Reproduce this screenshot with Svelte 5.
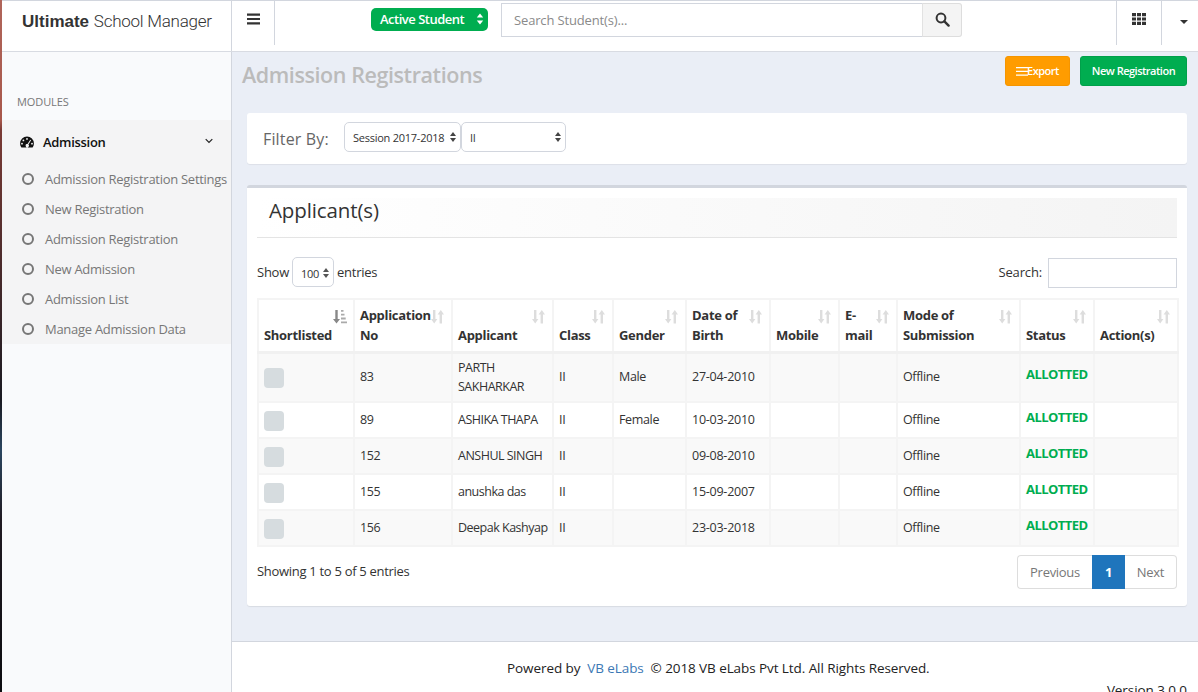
<script>
  const menu = ['Admission Registration Settings', 'New Registration', 'Admission Registration', 'New Admission', 'Admission List', 'Manage Admission Data'];
  const cols = [
    { l: ['Shortlisted'], active: true },
    { l: ['Application', 'No'] },
    { l: ['Applicant'] },
    { l: ['Class'] },
    { l: ['Gender'] },
    { l: ['Date of', 'Birth'] },
    { l: ['Mobile'] },
    { l: ['E-', 'mail'] },
    { l: ['Mode of', 'Submission'] },
    { l: ['Status'] },
    { l: ['Action(s)'] }
  ];
  const rows = [
    { no: '83', name: ['PARTH', 'SAKHARKAR'], g: 'Male', d: '27-04-2010' },
    { no: '89', name: ['ASHIKA THAPA'], g: 'Female', d: '10-03-2010' },
    { no: '152', name: ['ANSHUL SINGH'], g: '', d: '09-08-2010' },
    { no: '155', name: ['anushka das'], g: '', d: '15-09-2007' },
    { no: '156', name: ['Deepak Kashyap'], g: '', d: '23-03-2018' }
  ];
</script>

<div class="page">
  <div class="strip"></div>
  <div class="shell">
    <header class="topbar">
      <div class="brand"><b>Ultimate</b> <span>School Manager</span></div>
      <button class="toggle" aria-label="Toggle menu">
        <svg width="13" height="12" viewBox="0 0 13 12"><path d="M0 .5h13v2.2H0zM0 4.9h13v2.2H0zM0 9.3h13v2.2H0z" fill="#333"/></svg>
      </button>
      <div class="navcenter">
        <div class="status">
          <span>Active Student</span>
          <svg width="8" height="12" viewBox="0 0 8 12"><path d="M4 .5 7.2 4.6H.8zM4 11.5 .8 7.4h6.4z" fill="#fff"/></svg>
        </div>
        <div class="searchgroup">
          <div class="searchinput">Search Student(s)...</div>
          <div class="searchbtn">
            <svg width="15" height="15" viewBox="0 0 15 15"><circle cx="6" cy="6" r="4.4" fill="none" stroke="#333" stroke-width="2"/><path d="m9.4 9.4 4.2 4.2" stroke="#333" stroke-width="2.4" stroke-linecap="round"/></svg>
          </div>
        </div>
      </div>
      <div class="navright">
        <div class="navitem grid">
          <svg width="14" height="12" viewBox="0 0 14 12" fill="#333"><path d="M0 0h4v3.2H0zM5 0h4v3.2H5zM10 0h4v3.2h-4zM0 4.400h4v3.200H0zM5 4.400h4v3.200H5zM10 4.400h4v3.200h-4zM0 8.800h4V12H0zM5 8.800h4V12H5zM10 8.800h4V12h-4z"/></svg>
        </div>
        <div class="navitem caretitem">
          <svg width="8" height="4" viewBox="0 0 8 4"><path d="M0 0h8L4 4z" fill="#333"/></svg>
        </div>
      </div>
    </header>

    <div class="body">
      <aside class="sidebar">
        <div class="modules">MODULES</div>
        <div class="tree">
          <div class="treehead">
            <svg width="14" height="12" viewBox="0 0 14 12"><path fill-rule="evenodd" d="M7 .6A6.9 6.9 0 0 0 .1 7.5c0 1.5.5 2.9 1.3 4h11.200c.8-1.100 1.300-2.500 1.300-4A6.900 6.900 0 0 0 7 .6zM7 2a.9.9 0 1 1 0 1.800A.9.9 0 0 1 7 2zM3.400 3.500a.9.9 0 1 1 0 1.800.9.9 0 0 1 0-1.800zM2 6.800a.9.9 0 1 1 0 1.800.9.9 0 0 1 0-1.800zm10 0a.9.9 0 1 1 0 1.800.9.9 0 0 1 0-1.800zM10.300 3.700l.8.5-2.700 4.400a1.600 1.600 0 1 1-.9-.5z" fill="#111"/></svg>
            <span class="treetitle">Admission</span>
            <svg class="chev" width="8" height="6" viewBox="0 0 8 6"><path d="m.7 1.200 3.300 3.300 3.300-3.300" fill="none" stroke="#222" stroke-width="1.200"/></svg>
          </div>
          {#each menu as m}
            <div class="treeitem"><span class="ring"></span><span>{m}</span></div>
          {/each}
        </div>
      </aside>

      <main class="main">
        <div class="content">
          <div class="titlerow">
            <h1>Admission Registrations</h1>
            <div class="actions">
              <div class="btn orange">
                <svg width="12" height="9" viewBox="0 0 12 9"><path d="M0 0h12v1.200H0zM0 3.800h12V5H0zM0 7.600h12v1.200H0z" fill="#fff"/></svg><span>Export</span>
              </div>
              <div class="btn green">New Registration</div>
            </div>
          </div>

          <section class="filter">
            <span class="filterlabel">Filter By:</span>
            <div class="sel session">
              <span>Session 2017-2018</span>
              <svg width="6" height="10" viewBox="0 0 6 10"><path d="M3 0 6 4H0zM3 10 0 6h6z" fill="#444"/></svg>
            </div>
            <div class="sel cls">
              <span>II</span>
              <svg width="6" height="10" viewBox="0 0 6 10"><path d="M3 0 6 4H0zM3 10 0 6h6z" fill="#444"/></svg>
            </div>
          </section>

          <section class="box">
            <div class="boxhead"><h2>Applicant(s)</h2></div>
            <div class="controls">
              <div class="show">
                Show
                <div class="sel len">
                  <span>100</span>
                  <svg width="6" height="10" viewBox="0 0 6 10"><path d="M3 0 6 4H0zM3 10 0 6h6z" fill="#555"/></svg>
                </div>
                entries
              </div>
              <div class="dtsearch"><span class="dtlabel">Search:</span> <span class="dtinput"></span></div>
            </div>

            <table>
              <thead>
                <tr>
                  {#each cols as c}
                    <th>
                      <div class="thlabel">
                        {#each c.l as line}<div>{line}</div>{/each}
                      </div>
                      {#if c.active}
                        <span class="sort on">
                          <svg width="14" height="15" viewBox="0 0 14 15"><path d="M2.300 1h2.400v9h2.300L3.500 14.500 0 10h2.300z" fill="#888"/><path d="M8 1h2.500v1.800H8zM8 4.800h3.500v1.800H8zM8 8.600h4.700v1.800H8zM8 12.400H14v1.800H8z" fill="#aaa"/></svg>
                        </span>
                      {:else}
                        <span class="sort">
                          <svg width="13" height="15" viewBox="0 0 13 15" fill="#ddd"><path d="M2 1h2.400v9h2L3.200 14.500 0 10h2zM8.600 14.500H11v-9h2L9.800 1 6.600 5.500h2z"/></svg>
                        </span>
                      {/if}
                    </th>
                  {/each}
                </tr>
              </thead>
              <tbody>
                {#each rows as r}
                  <tr>
                    <td><span class="check"></span></td>
                    <td>{r.no}</td>
                    <td class="name">{#each r.name as n}<div>{n}</div>{/each}</td>
                    <td>II</td>
                    <td>{r.g}</td>
                    <td class="date">{r.d}</td>
                    <td></td>
                    <td></td>
                    <td>Offline</td>
                    <td><span class="allotted">ALLOTTED</span></td>
                    <td></td>
                  </tr>
                {/each}
              </tbody>
            </table>

            <div class="tablefoot">
              <div>Showing 1 to 5 of 5 entries</div>
              <div class="pager">
                <span class="pg prev">Previous</span>
                <span class="pg cur">1</span>
                <span class="pg next">Next</span>
              </div>
            </div>
          </section>
        </div>

        <footer class="foot">
          <div class="powered">Powered by &nbsp;<span class="link">VB eLabs</span>&nbsp; © 2018 VB eLabs Pvt Ltd. All Rights Reserved.</div>
          <div class="version">Version 3.0.0</div>
        </footer>
      </main>
    </div>
  </div>
</div>

<style>
  :global(body) { margin: 0; background: #fff; }
  * { box-sizing: border-box; }
  .page {
    width: 1198px; height: 692px; overflow: hidden; display: flex;
    font-family: "Open Sans", sans-serif; font-size: 13px; letter-spacing: -.3px; color: #333;
  }
  .strip {
    width: 2px; flex: none;
    background: linear-gradient(#b0655a 0, #a8584c 120px, #7a3b35 130px, #1a1a22 400px, #2b4660 450px, #201a22 520px, #0c0c10 692px);
  }
  .shell { flex: 1; display: flex; flex-direction: column; min-width: 0; border-top: 1px solid #d2d6de; }

  .topbar { height: 51px; flex: none; display: flex; border-bottom: 1px solid #d8dbe2; background: #fff; }
  .brand {
    width: 230px; flex: none; border-right: 1px solid #d2d6de; padding: 10px 0 0 20px;
    font-family: "Liberation Sans", sans-serif; font-size: 17px; color: #333; letter-spacing: 0; white-space: nowrap;
  }
  .brand span { font-family: Roboto, sans-serif; font-weight: 300; letter-spacing: -.25px; }
  .toggle {
    width: 43px; height: 44px; flex: none; padding: 0 0 8px; background: none; border: 0; border-right: 1px solid #d2d6de;
    display: flex; align-items: center; justify-content: center;
  }
  .navcenter { flex: 1; display: flex; align-items: flex-start; padding-left: 96px; }
  .status {
    margin-top: 7px; width: 117px; height: 23px; border-radius: 5px; background: #00ad50; color: #fff;
    font-weight: 600; font-size: 13px; letter-spacing: -.5px; display: flex; align-items: center; justify-content: space-between; padding: 0 4px 1px 9px; white-space: nowrap;
  }
  .searchgroup { margin: 2px 0 0 13px; display: flex; height: 34px; width: 461px; }
  .searchinput { flex: 1; border: 1px solid #d2d6de; color: #8a8a8a; padding: 7px 12px; letter-spacing: -.15px; }
  .searchbtn {
    width: 40px; background: #f4f4f4; border: 1px solid #ddd; border-left: 1px solid #e2e2e2; border-radius: 0 3px 3px 0; margin-left: -1px;
    display: flex; align-items: center; justify-content: center; padding-bottom: 2px;
  }
  .navright { display: flex; align-items: flex-start; }
  .navitem { height: 44px; display: flex; align-items: center; justify-content: center; border-left: 1px solid #d2d6de; }
  .grid { width: 45px; padding-bottom: 8px; }
  .caretitem { width: 37px; padding: 0 0 2px 7px; }

  .body { flex: 1; display: flex; min-height: 0; }
  .sidebar { width: 230px; flex: none; background: #f9fafc; border-right: 1px solid #d2d6de; }
  .modules { padding: 41px 0 0 15px; height: 68px; font-size: 11px; letter-spacing: -.1px; color: #777; line-height: 18px; }
  .tree { background: #f4f4f5; height: 224px; }
  .treehead { height: 44px; display: flex; align-items: center; padding: 0 0 0 18px; color: #111; }
  .treetitle { margin-left: 9px; font-weight: 600; font-size: 13px; }
  .chev { margin-left: auto; margin-right: 18px; margin-bottom: 3px; }
  .treeitem { height: 30px; display: flex; align-items: center; padding-left: 20px; color: #777; white-space: nowrap; letter-spacing: -.28px; }
  .ring { width: 12px; height: 12px; border: 2px solid #777; border-radius: 50%; margin-right: 11px; flex: none; }

  .main { flex: 1; min-width: 0; display: flex; flex-direction: column; background: #eaeef6; }
  .content { height: 589px; flex: none; padding: 0 11px 0 15px; position: relative; }
  .titlerow { height: 61px; display: flex; justify-content: space-between; margin-left: -5px; }
  h1 { margin: 8px 0 0; font-size: 21.500px; font-weight: 600; letter-spacing: -.42px; color: #bbb; line-height: 29px; }
  .actions { display: flex; gap: 10px; padding-top: 4px; }
  .btn {
    height: 30px; border-radius: 3px; color: #fff; font-weight: 600; font-size: 11px; letter-spacing: -.5px; display: flex; align-items: center; justify-content: center; white-space: nowrap; padding-bottom: 1px;
  }
  .orange { width: 65px; background: #ff9c00; border: 1px solid #f59500; }
  .orange svg { margin-top: 1px; margin-right: -1px; }
  .green { width: 107px; background: #00ad50; border: 1px solid #00a04a; }

  .filter {
    width: 940px; height: 51px; background: #fff; border-radius: 3px; display: flex; align-items: center; padding-left: 16px;
    box-shadow: 0 1px 1px rgba(0,0,0,.06);
  }
  .filterlabel { font-size: 16px; font-weight: 500; color: #666; width: 81px; white-space: nowrap; letter-spacing: .15px; }
  .sel {
    border: 1px solid #d2d6de; border-radius: 5px; background: #fff; display: flex; align-items: center; justify-content: space-between;
    height: 30px; font-size: 11px; color: #333; white-space: nowrap; flex: none;
  }
  .session { width: 117px; padding: 0 4px 0 8px; margin-bottom: 3px; letter-spacing: -.25px; }
  .cls { width: 105px; padding: 0 4px 0 8px; margin-bottom: 3px; }
  .box {
    width: 940px; height: 421px; margin-top: 21px; background: #fff; border-top: 3px solid #d2d6de; border-radius: 3px;
    padding: 10px 10px 0; box-shadow: 0 1px 1px rgba(0,0,0,.08);
  }
  .boxhead {
    height: 40px; border-bottom: 1px solid #e4e4e4;
    background: linear-gradient(90deg, #fff 0, #f4f4f4 100%); padding-left: 12px;
  }
  h2 { margin: 0; font-size: 20.500px; font-weight: 400; letter-spacing: -.12px; line-height: 24px; color: #333; }
  .controls { display: flex; justify-content: space-between; align-items: center; height: 30px; margin-top: 20px; }
  .show { display: flex; align-items: center; gap: 3px; padding-bottom: 2px; letter-spacing: -.25px; }
  .len { width: 42px; height: 30px; padding: 2px 4px 0 8px; font-size: 11px; }
  .dtsearch { display: flex; align-items: center; gap: 6px; letter-spacing: -.15px; }
  .dtlabel { padding-bottom: 2px; }
  .dtinput { width: 129px; height: 30px; border: 1px solid #d2d6de; display: block; }

  table { width: 920px; margin-top: 10px; border-collapse: collapse; table-layout: fixed; }
  th, td { border: 2px solid #f4f4f4; padding: 0 5px; white-space: nowrap; }
  th { height: 53px; position: relative; text-align: left; vertical-align: bottom; font-weight: 700; line-height: 20px; padding-bottom: 6px; }
  thead tr { border-bottom: 3px solid #f1f1f1; }
  th:nth-child(1) { width: 96px; }
  th:nth-child(2) { width: 98px; }
  th:nth-child(3) { width: 101px; }
  th:nth-child(4) { width: 60px; }
  th:nth-child(5) { width: 73px; }
  th:nth-child(6) { width: 84px; }
  th:nth-child(7) { width: 69px; }
  th:nth-child(8) { width: 58px; }
  th:nth-child(9) { width: 123px; }
  th:nth-child(10) { width: 74px; }
  th:nth-child(11) { width: 84px; }
  .sort { position: absolute; top: 9px; right: 7px; line-height: 0; }
  .sort.on { right: 6px; }
  td { height: 36px; line-height: 19px; color: #333; font-size: 12.500px; letter-spacing: -.35px; padding-bottom: 1px; }
  td.name { letter-spacing: -.5px; }
  td.date { letter-spacing: -.25px; }
  tbody tr:first-child td { height: 50px; }
  tbody tr:nth-child(odd) td { background: #f9f9f9; }
  .check { display: block; width: 20px; height: 20px; border-radius: 4px; background: #d6dcdf; margin-top: 3px; }
  .allotted { color: #00ad50; font-weight: 700; display: block; margin-top: -5px; font-size: 13px; letter-spacing: -.55px; }
  .tablefoot { display: flex; justify-content: space-between; margin-top: 8px; }
  .tablefoot > div:first-child { padding-top: 7px; }
  .pager { display: flex; height: 34px; }
  .pg { display: flex; align-items: center; justify-content: center; height: 34px; border: 1px solid #ddd; color: #777; }
  .prev { width: 75px; border-radius: 4px 0 0 4px; border-right: 0; }
  .cur { width: 33px; background: #1f75bc; border-color: #1f75bc; color: #fff; font-weight: 700; }
  .next { width: 52px; border-radius: 0 4px 4px 0; border-left: 0; }

  .foot { flex: 1; background: #fff; border-top: 1px solid #d2d6de; position: relative; letter-spacing: -.08px; font-size: 13.500px; }
  .powered { padding: 16px 0 0 275px; color: #222; line-height: 20px; white-space: nowrap; }
  .link { color: #3c78b4; }
  .version { text-align: right; padding: 2px 11px 0 0; line-height: 20px; color: #222; }
</style>
